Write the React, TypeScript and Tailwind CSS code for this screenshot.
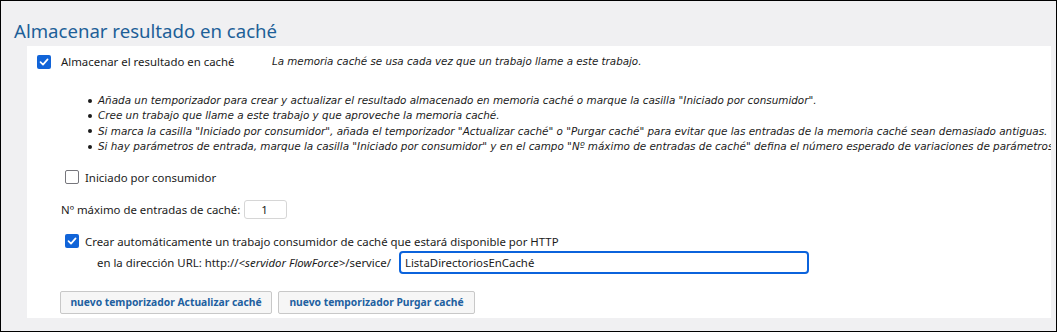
import React from "react";

const font = { fontFamily: '"Noto Sans", "Open Sans", sans-serif' };
const italicFont = { fontFamily: '"DejaVu Sans", "Liberation Sans", sans-serif' };

const Check: React.FC<{ checked?: boolean }> = ({ checked }) =>
  checked ? (
    <div className="w-[14px] h-[14px] rounded-[2px] bg-[#1164d8] flex items-center justify-center shrink-0">
      <svg width="10" height="10" viewBox="0 0 10 10" fill="none">
        <path d="M1.5 5.2 L4 7.6 L8.6 2.4" stroke="white" strokeWidth="1.7" strokeLinecap="round" strokeLinejoin="round" />
      </svg>
    </div>
  ) : (
    <div className="w-[14px] h-[14px] rounded-[2px] border-[1.5px] border-[#76767c] bg-white shrink-0" />
  );

const bullets = [
  'Añada un temporizador para crear y actualizar el resultado almacenado en memoria caché o marque la casilla "Iniciado por consumidor".',
  "Cree un trabajo que llame a este trabajo y que aproveche la memoria caché.",
  'Si marca la casilla "Iniciado por consumidor", añada el temporizador "Actualizar caché" o "Purgar caché" para evitar que las entradas de la memoria caché sean demasiado antiguas.',
  'Si hay parámetros de entrada, marque la casilla "Iniciado por consumidor" y en el campo "Nº máximo de entradas de caché" defina el número esperado de variaciones de parámetros de entrada.',
];

export default function App() {
  return (
    <div
      className="w-[1057px] h-[332px] border border-black bg-[#f0f0f2] flex flex-col text-[#1b1b1b]"
      style={font}
    >
      <h1 className="h-[45px] pl-[13px] pt-[16px] text-[18.6px] leading-[27px] text-[#1d5f98] font-normal">
        Almacenar resultado en caché
      </h1>

      <div className="flex-1 ml-[26px] mr-[5px] mb-[13px] bg-white overflow-hidden flex flex-col text-[11.4px]">
        <div className="flex items-center h-[14px] mt-[9px] pl-[10px]">
          <Check checked />
          <span className="ml-[10px] w-[211px] shrink-0">Almacenar el resultado en caché</span>
          <span className="italic text-[10.3px]" style={italicFont}>
            La memoria caché se usa cada vez que un trabajo llame a este trabajo.
          </span>
        </div>

        <ul className="mt-[24px] pl-[61px] italic text-[10.4px] leading-[15.33px] whitespace-nowrap" style={italicFont}>
          {bullets.map((b) => (
            <li key={b} className="flex items-center">
              <span className="w-[4px] h-[4px] rounded-full bg-[#1b1b1b] mr-[6px] shrink-0" />
              {b}
            </li>
          ))}
        </ul>

        <div className="flex items-center h-[14px] mt-[16px] pl-[38px]">
          <Check />
          <span className="ml-[6px]">Iniciado por consumidor</span>
        </div>

        <div className="flex items-center h-[19px] mt-[16px] pl-[34px]">
          <span>Nº máximo de entradas de caché:</span>
          <div className="ml-[4px] w-[43px] h-[19px] border border-[#d6d6d6] rounded-[3px] flex items-center pl-[16px]">
            1
          </div>
        </div>

        <div className="flex items-center h-[14px] mt-[15px] pl-[38px]">
          <Check checked />
          <span className="ml-[6px]">
            Crear automáticamente un trabajo consumidor de caché que estará disponible por HTTP
          </span>
        </div>

        <div className="flex items-center h-[23px] mt-[3px] pl-[70px]">
          <span>
            en la dirección URL: http://<i>&lt;servidor FlowForce&gt;</i>/service/
          </span>
          <div className="ml-[8px] w-[410px] h-[23px] border-2 border-[#0b63dc] rounded-[4px] flex items-center pl-[4px]">
            ListaDirectoriosEnCaché
          </div>
        </div>

        <div className="flex items-center gap-[6px] mt-[17px] pl-[33px]">
          <button className="h-[23px] w-[212px] border border-[#c8c8c8] rounded-[2px] bg-[#f6f6f6] text-[#2160a0] font-bold text-[10.3px] whitespace-nowrap">
            nuevo temporizador Actualizar caché
          </button>
          <button className="h-[23px] w-[197px] border border-[#c8c8c8] rounded-[2px] bg-[#f6f6f6] text-[#2160a0] font-bold text-[10.3px] whitespace-nowrap">
            nuevo temporizador Purgar caché
          </button>
        </div>
      </div>
    </div>
  );
}
